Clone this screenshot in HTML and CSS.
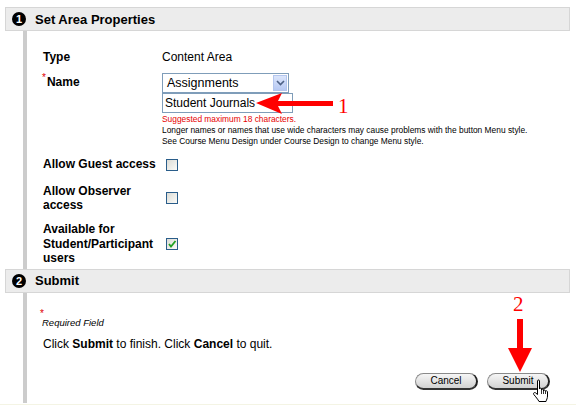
FILE: index.html
```html
<!DOCTYPE html>
<html lang="en">
<head>
  <meta charset="UTF-8" />
  <title>Set Area Properties</title>
  <link rel="stylesheet" href="styles.css">
</head>
<body>
  <div class="page">
    <div class="panel-head"><span class="step-num">1</span>Set Area Properties</div>
    <div class="panel-body props">
      <div class="row row-type">
        <div class="label">Type</div>
        <div class="value">Content Area</div>
      </div>
      <div class="row row-name">
        <div class="label name-label"><span class="req">*</span>Name</div>
        <div class="value">
          <div class="select">
            <span>Assignments</span>
            <span class="select-btn">
              <svg width="9" height="6" viewBox="0 0 9 6"><path d="M1 1 L4.5 4.5 L8 1" fill="none" stroke="#4d6185" stroke-width="1.6"/></svg>
            </span>
          </div>
          <div class="text-input">Student Journals</div>
          <div class="hint hint-warn">Suggested maximum 18 characters.</div>
          <div class="hint">Longer names or names that use wide characters may cause problems with the button Menu style.</div>
          <div class="hint">See Course Menu Design under Course Design to change Menu style.</div>
        </div>
      </div>
      <div class="row row-guest">
        <div class="label">Allow Guest access</div>
        <div class="value"><span class="check"></span></div>
      </div>
      <div class="row row-observer">
        <div class="label">Allow Observer access</div>
        <div class="value"><span class="check"></span></div>
      </div>
      <div class="row row-avail">
        <div class="label">Available for Student/Participant users</div>
        <div class="value">
          <span class="check">
            <svg width="10" height="10" viewBox="0 0 10 10"><path d="M2 5 L4 7.5 L8.5 2" fill="none" stroke="#21a121" stroke-width="1.8"/></svg>
          </span>
        </div>
      </div>
    </div>

    <div class="panel-head"><span class="step-num">2</span>Submit</div>
    <div class="panel-body submit-body">
      <div class="req-note">
        <span class="req-star">*</span>
        <span class="req-text">Required Field</span>
      </div>
      <p class="submit-text">Click <b>Submit</b> to finish. Click <b>Cancel</b> to quit.</p>
      <div class="actions">
        <button class="pill">Cancel</button>
        <button class="pill">Submit</button>
      </div>
    </div>
    <div class="page-foot"></div>

    <!-- annotations drawn over the screenshot -->
    <svg class="callout callout-one" width="110" height="26" viewBox="0 0 110 26">
      <polygon points="6,11 32,1 28,9 83,9 83,14 28,14 32,22" fill="#ff0000"/>
      <text x="88" y="21" class="callout-num">1</text>
    </svg>
    <span class="callout callout-label">2</span>
    <svg class="callout callout-two" width="34" height="56" viewBox="0 0 34 56">
      <polygon points="13,1 19,1 19,30 28,30 16,54 4,30 13,30" fill="#ff0000"/>
    </svg>
    <svg class="callout hand" width="18" height="24" viewBox="0 0 18 24">
      <path d="M5.5 2 C5.5 0.6 7.5 0.6 7.5 2 V10 C7.5 8.8 9.5 8.8 9.5 10 V11 C9.5 9.8 11.5 9.8 11.5 11 V12 C11.5 10.8 13.5 10.8 13.5 12 V12.5 C13.5 11.5 15.5 11.5 15.5 12.8 V17 C15.5 19.5 14.5 20.5 14 22.5 H7 C6 20.5 3.5 17.5 1.8 15.5 C0.9 14.4 2.3 12.9 3.5 13.8 L5.5 15.5 Z" fill="#fff" stroke="#000" stroke-width="1"/>
      <path d="M9.5 11 V15 M11.5 12 V15 M13.5 12.5 V15" stroke="#000" stroke-width="0.8"/>
    </svg>
  </div>
</body>
</html>
```

FILE: styles.css
```css
body {
  margin: 0;
  background: #fff;
  font-family: "Liberation Sans", Arial, sans-serif;
  color: #000;
}

.page {
  position: relative;
  width: 576px;
  height: 405px;
  overflow: hidden;
  padding-top: 7px;
  box-sizing: border-box;
}

.panel-head {
  display: flex;
  align-items: center;
  gap: 9px;
  height: 22px;
  margin: 0 6px 0 5px;
  padding-left: 6px;
  background: #ececec;
  border: 1px solid #d6d6d6;
  font-size: 13px;
  font-weight: bold;
}

.step-num {
  display: flex;
  align-items: center;
  justify-content: center;
  width: 14px;
  height: 14px;
  border-radius: 50%;
  background: #000;
  color: #fff;
  font-size: 11px;
  font-weight: bold;
}

.panel-body {
  margin-left: 23px;
  border-left: 4px solid #cccccc;
  padding-left: 16px;
}

.props {
  padding-top: 19px;
  padding-bottom: 3px;
}

.row {
  display: grid;
  grid-template-columns: 119px 1fr;
  align-items: center;
}

.label {
  font-size: 12px;
  font-weight: bold;
  line-height: 14px;
  padding-right: 6px;
}

.value {
  font-size: 12px;
  line-height: 14px;
}

.row-name {
  margin-top: 9px;
  align-items: start;
}

.name-label {
  margin-top: 2px;
  margin-left: -1px;
}

.req {
  color: #e00000;
  font-size: 10px;
  line-height: 0;
  font-weight: normal;
  vertical-align: 5px;
  margin-right: 1px;
}

.select {
  display: flex;
  align-items: center;
  justify-content: space-between;
  box-sizing: border-box;
  width: 127px;
  height: 20px;
  border: 1px solid #7f9db9;
  padding: 0 1px 0 4px;
  font-size: 12.5px;
}

.select-btn {
  display: flex;
  align-items: center;
  justify-content: center;
  width: 14px;
  height: 16px;
  background: linear-gradient(#dbe5fb, #b7c9f3);
  border: 1px solid #b4c6ee;
  box-sizing: border-box;
}

.text-input {
  box-sizing: border-box;
  width: 131px;
  height: 20px;
  border: 1px solid #7f9db9;
  padding: 2px 2px 0;
  font-size: 12px;
  line-height: 15px;
}

.hint {
  font-size: 8.4px;
  line-height: 11px;
}

.hint-warn {
  color: #e60000;
  margin-top: 1px;
}

.check {
  display: flex;
  align-items: center;
  justify-content: center;
  box-sizing: border-box;
  width: 12px;
  height: 12px;
  margin-left: 4px;
  border: 1px solid #2a5d8a;
  background: linear-gradient(135deg, #dcdcd6, #fbfbf8);
}

.row-guest { margin-top: 9px; }
.row-guest .check { margin-top: 3px; }
.row-observer { margin-top: 13px; }
.row-avail { margin-top: 10px; }
.row-avail .label { line-height: 14.5px; }

.submit-body {
  padding-top: 16px;
  padding-bottom: 13px;
}

.req-note {
  display: flex;
  flex-direction: column;
}

.req-star {
  color: #e00000;
  font-size: 10px;
  line-height: 9px;
  height: 9px;
  margin-left: -3px;
}

.req-text {
  font-size: 9.5px;
  font-style: italic;
  line-height: 9px;
  margin-left: -1px;
}

.submit-text {
  margin: 10px 0 0;
  font-size: 12px;
  line-height: 14px;
}

.actions {
  display: flex;
  justify-content: flex-end;
  gap: 9px;
  margin-top: 22px;
  padding-right: 26px;
}

.pill {
  width: 63px;
  height: 17px;
  padding: 0;
  border: 1px solid #8a8a8a;
  border-right: 2px solid #222;
  border-bottom: 2px solid #333;
  border-radius: 9px;
  background: linear-gradient(#f6f6f6, #d2d2d2);
  font-family: "Liberation Sans", Arial, sans-serif;
  font-size: 10px;
  line-height: 13px;
  color: #000;
}

.page-foot {
  height: 3px;
  margin-top: 1px;
  background: #f4f4e4;
}

.callout {
  position: absolute;
}

.callout-num {
  font-family: "Liberation Serif", "Times New Roman", serif;
  font-size: 21px;
  fill: #ff0000;
}

.callout-one {
  left: 250px;
  top: 92px;
}

.callout-label {
  left: 513px;
  top: 293px;
  font-family: "Liberation Serif", "Times New Roman", serif;
  font-size: 21px;
  line-height: 22px;
  color: #ff0000;
}

.callout-two {
  left: 504px;
  top: 318px;
}

.hand {
  left: 532px;
  top: 379px;
}
```
